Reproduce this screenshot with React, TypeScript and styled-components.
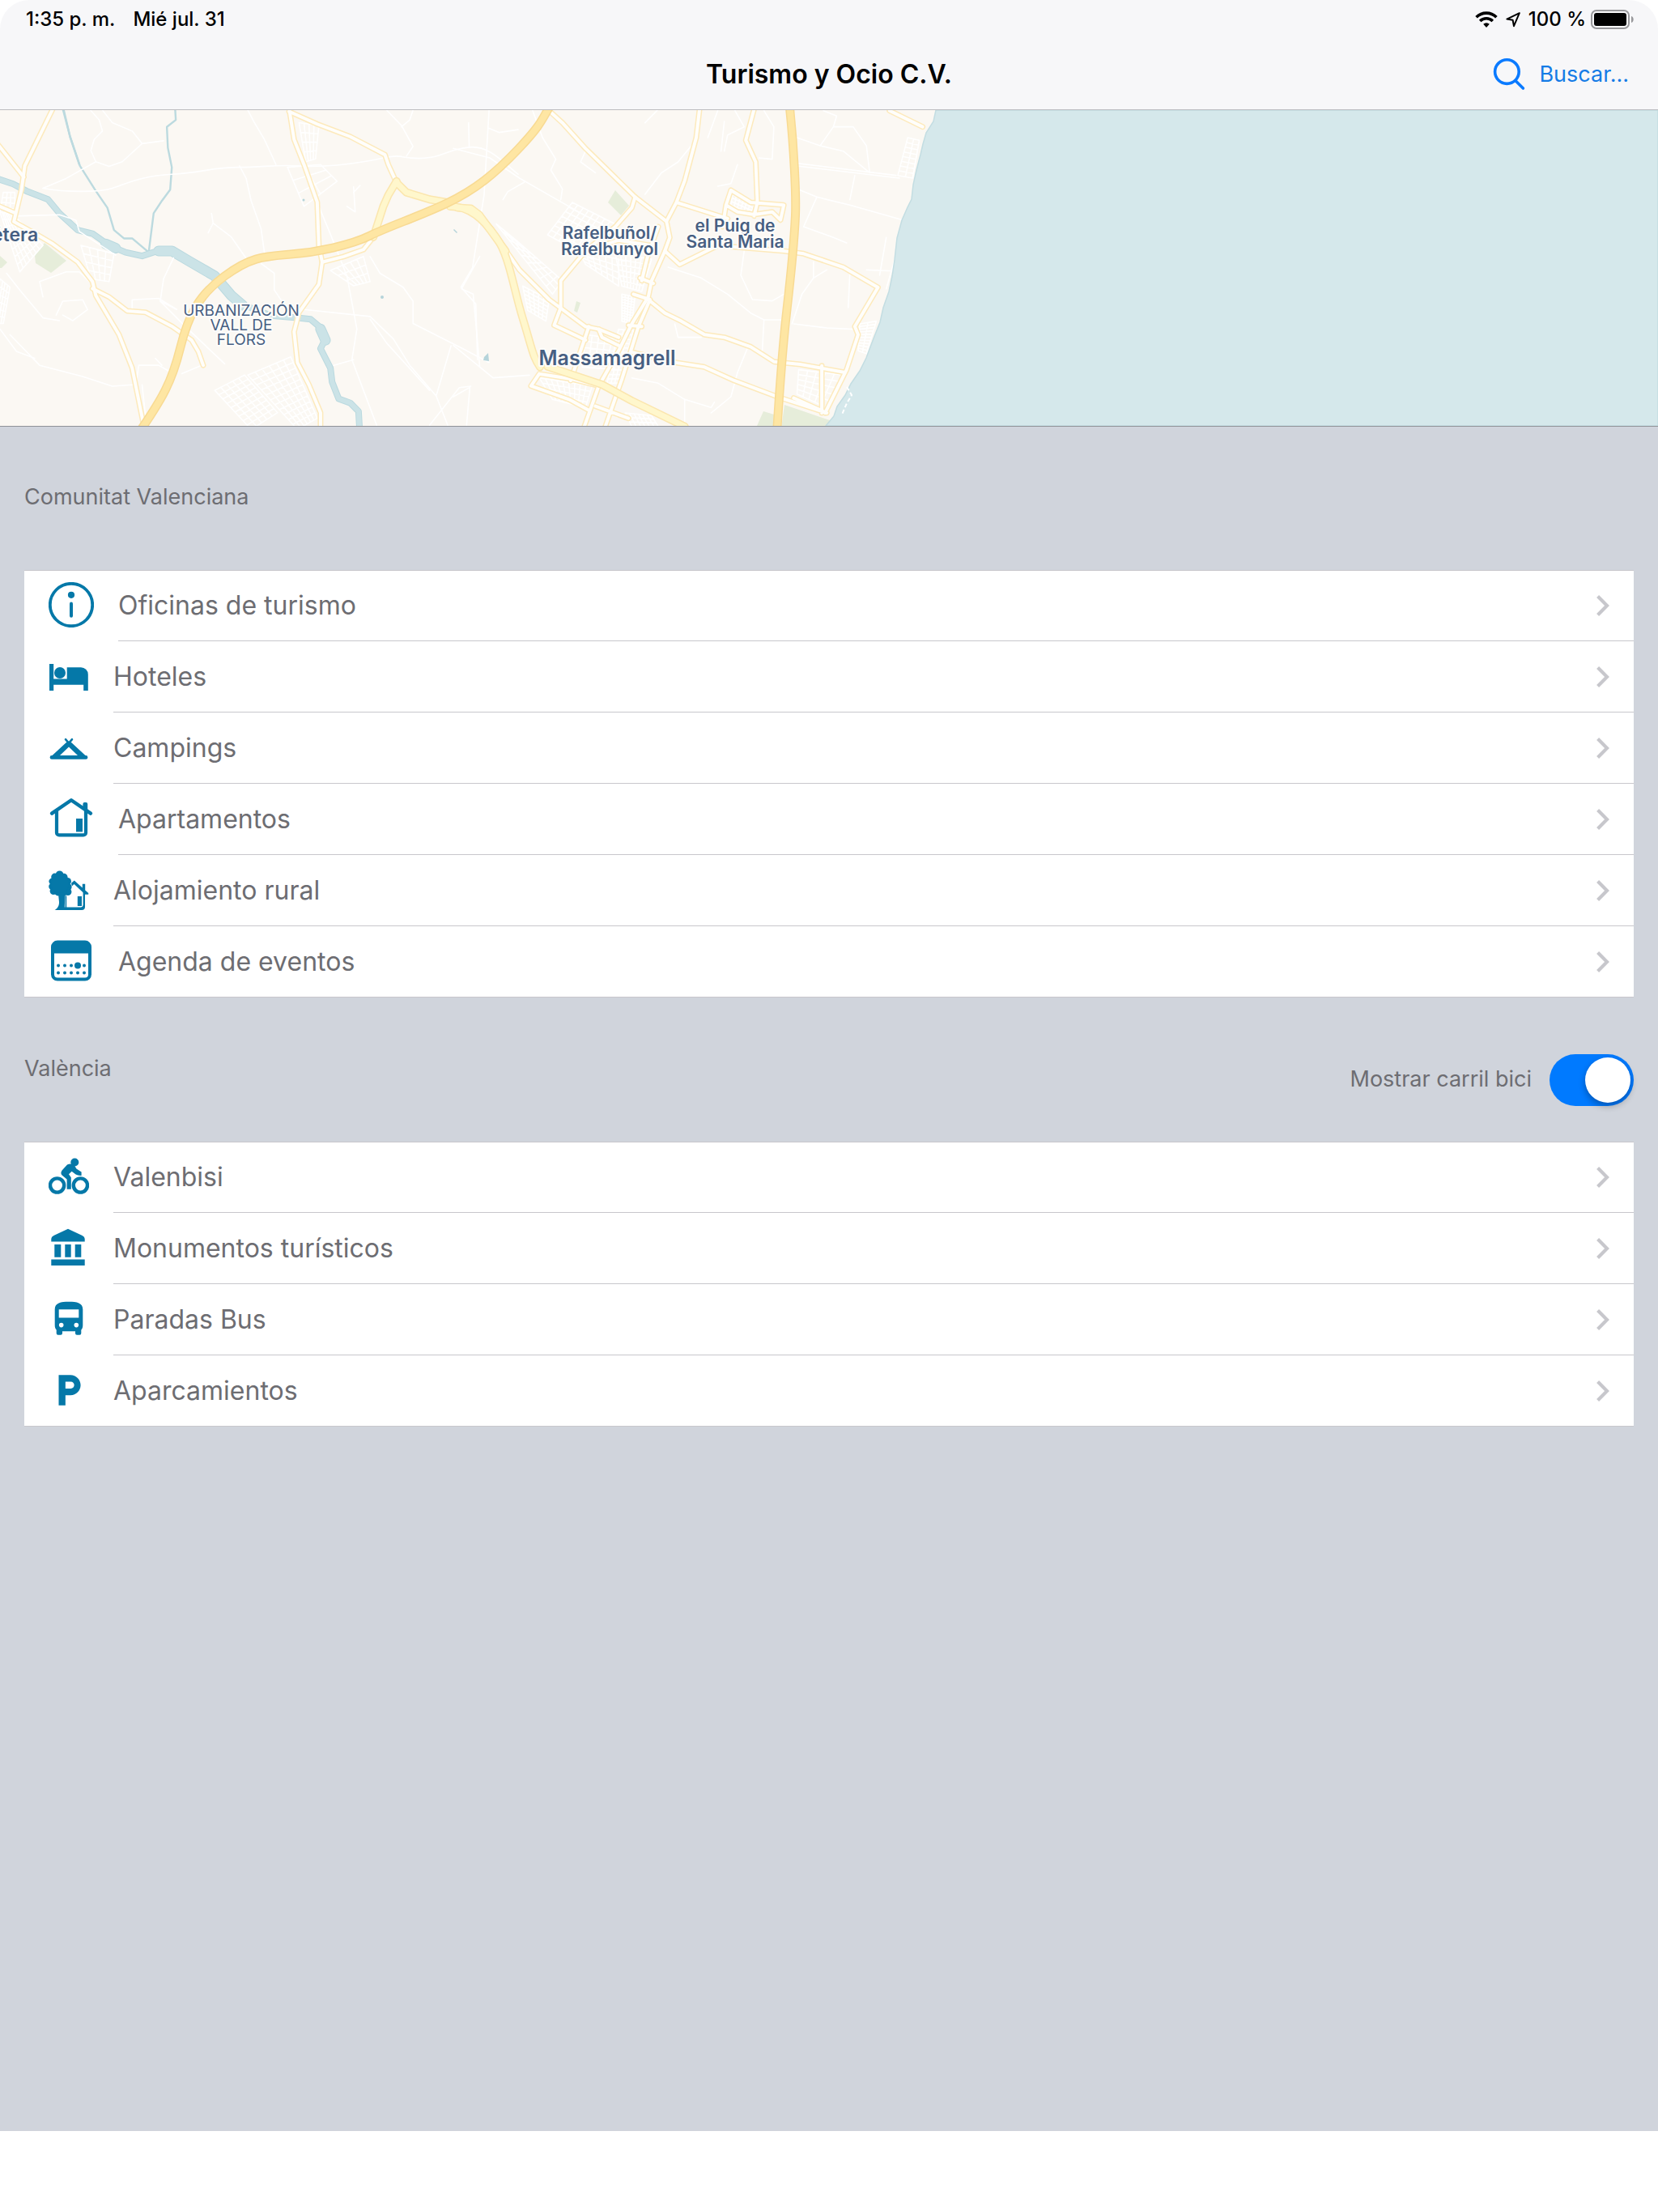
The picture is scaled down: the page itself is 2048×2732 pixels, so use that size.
import React, { useState } from "react";
import styled, { createGlobalStyle } from "styled-components";
import { MdLocalParking } from "react-icons/md";

const BRAND = "#0578a8";
const GREY_TEXT = "#6d6d72";
const LINE = "#c8c7cc";

const GlobalStyle = createGlobalStyle`
  *, *::before, *::after { box-sizing: border-box; }
  body {
    margin: 0;
    background: #ffffff;
    font-family: Inter, "Liberation Sans", sans-serif;
    -webkit-font-smoothing: antialiased;
  }
`;

const Page = styled.div`
  display: flex;
  flex-direction: column;
  min-height: 100vh;
`;

const Header = styled.header`
  background: #f7f7f9;
  border-bottom: 1px solid #bcbcc0;
  border-radius: 36px 36px 0 0;
`;

const StatusBar = styled.div`
  display: flex;
  align-items: center;
  justify-content: space-between;
  height: 48px;
  padding: 0 30px 0 32px;
  font-size: 24px;
  font-weight: 500;
  line-height: 32px;
  color: #000000;
`;

const StatusGroup = styled.div<{ $gap: number }>`
  display: flex;
  align-items: center;
  gap: ${(p) => p.$gap}px;
`;

const NavBar = styled.div`
  display: grid;
  grid-template-columns: 1fr auto 1fr;
  align-items: center;
  height: 87px;
  padding: 0 36px;
`;

const Title = styled.h1`
  grid-column: 2;
  margin: 0;
  font-size: 32px;
  font-weight: 600;
  line-height: 40px;
  color: #000000;
`;

const SearchButton = styled.button`
  justify-self: end;
  display: flex;
  align-items: center;
  gap: 16px;
  padding: 0;
  border: 0;
  background: none;
  color: #147be6;
  font: inherit;
  font-size: 27px;
  line-height: 40px;
  cursor: pointer;
`;

const MapFrame = styled.section`
  height: 391px;
  border-bottom: 1px solid #8f9298;
  background: #fbf8f3;
  overflow: hidden;

  svg { display: block; width: 100%; height: 100%; }
`;

const Main = styled.main`
  flex: 1;
  display: flex;
  flex-direction: column;
  gap: 1px;
  padding: 0 30px;
  background: #d0d4dc;
`;

const SectionHead = styled.div`
  display: flex;
  justify-content: space-between;
  align-items: flex-start;
  height: 177px;
  padding-top: 69px;
`;

const SectionTitle = styled.h2`
  margin: 0;
  font-size: 27px;
  font-weight: 400;
  line-height: 36px;
  color: ${GREY_TEXT};
`;

const SwitchLabel = styled.label`
  display: flex;
  align-items: flex-start;
  gap: 22px;
  font-size: 27px;
  line-height: 61px;
  color: ${GREY_TEXT};
`;

const Switch = styled.input`
  appearance: none;
  display: flex;
  justify-content: flex-start;
  width: 104px;
  height: 64px;
  margin: 0;
  padding: 4px;
  border-radius: 32px;
  background: #e5e5ea;
  cursor: pointer;

  &::after {
    content: "";
    width: 56px;
    height: 56px;
    border-radius: 50%;
    background: #ffffff;
    box-shadow: 0 4px 8px rgba(0, 0, 0, 0.3);
  }

  &:checked {
    justify-content: flex-end;
    background: #007aff;
  }
`;

const List = styled.ul`
  margin: 0;
  padding: 0;
  list-style: none;
  background: #ffffff;
  box-shadow: inset 0 1px ${LINE}, inset 0 -1px ${LINE};
`;

const RowLink = styled.a`
  display: flex;
  align-items: stretch;
  gap: 30px;
  height: 88px;
  padding-left: 30px;
  color: ${GREY_TEXT};
  text-decoration: none;
`;

const IconSlot = styled.span<{ $size: number }>`
  flex: none;
  display: flex;
  align-items: center;
  justify-content: center;
  width: ${(p) => p.$size}px;
  padding-bottom: 2px;
  color: ${BRAND};
`;

const RowBody = styled.span`
  flex: 1;
  display: flex;
  align-items: center;
  justify-content: space-between;
  padding-right: 30px;
  border-bottom: 1px solid ${LINE};
  font-size: 32px;
  line-height: 44px;
`;

const Footer = styled.footer`
  height: 100px;
  background: #ffffff;
`;

/* ---------- status and navigation icons ---------- */

const WifiIcon = () => (
  <svg width="28" height="22" viewBox="0 0 28 22" fill="none" stroke="#000" strokeWidth="3.6" aria-hidden="true">
    <path d="M1.6 8.2a17.6 17.6 0 0 1 24.8 0" />
    <path d="M6.2 13a11 11 0 0 1 15.6 0" />
    <path d="M14 21l-3.8-4.2a5.4 5.4 0 0 1 7.6 0z" fill="#000" stroke="none" />
  </svg>
);

const LocationIcon = () => (
  <svg width="18" height="20" viewBox="0 0 18 20" fill="none" stroke="#000" strokeWidth="2" strokeLinejoin="round" aria-hidden="true">
    <path d="M16.8 2.2L1.4 9.6l7.2 1.2 1.4 7.4z" />
  </svg>
);

const BatteryIcon = () => (
  <svg width="53" height="24" viewBox="0 0 53 24" aria-hidden="true">
    <rect x="1" y="1" width="46" height="22" rx="6" fill="none" stroke="#98989b" strokeWidth="2" />
    <rect x="4" y="4" width="40" height="16" rx="3" fill="#000" />
    <path d="M50 8c3.6 1 3.6 7 0 8z" fill="#98989b" />
  </svg>
);

const SearchIcon = () => (
  <svg width="42" height="42" viewBox="0 0 42 42" fill="none" stroke="#0a7aff" strokeWidth="3.6" strokeLinecap="round" aria-hidden="true">
    <circle cx="18.4" cy="17.6" r="14.8" />
    <path d="M28.8 28.4l9.6 9.6" />
  </svg>
);

const Chevron = () => (
  <svg width="16" height="26" viewBox="0 0 16 26" fill="none" stroke="#c7c7cc" strokeWidth="4.2" aria-hidden="true">
    <path d="M1.6 1.6L13 13 1.6 24.4" />
  </svg>
);

/* ---------- category icons ---------- */

type IconProps = { size: number; children: React.ReactNode };

const Glyph = ({ size, children }: IconProps) => (
  <svg width={size} height={size} viewBox={`0 0 ${size} ${size}`} fill="currentColor" aria-hidden="true">
    {children}
  </svg>
);

const stroke = { fill: "none", stroke: "currentColor", strokeLinecap: "round", strokeLinejoin: "round" } as const;

const InfoIcon = () => (
  <Glyph size={56}>
    <circle cx="28" cy="28" r="26.2" {...stroke} strokeWidth="3.8" />
    <circle cx="28" cy="15.8" r="4.1" />
    <path d="M28 26.4v15.4" {...stroke} strokeWidth="4" />
  </Glyph>
);

const BedIcon = () => (
  <Glyph size={50}>
    <path d="M1 10h5.2v18.5h16.5V14.2H40a8.8 8.8 0 0 1 8.8 8.8v20h-5.6v-7.3H6.2V43H1z" />
    <circle cx="14" cy="21" r="7" />
  </Glyph>
);

const CampIcon = () => (
  <Glyph size={50}>
    <path d="M21 15.2l4 4.6 4-4.6" {...stroke} strokeWidth="2.6" />
    <path
      fillRule="evenodd"
      d="M25 17.4l3.4 1.8L45.4 35h.6a2.4 2.4 0 0 1 0 4.8H4A2.4 2.4 0 0 1 4 35h.6l17-15.8zM25 24.6L14 34.9h22z"
    />
  </Glyph>
);

const HouseIcon = () => (
  <Glyph size={56}>
    <path d="M4 21.6L28 5.2l24 16.4" {...stroke} strokeWidth="4.4" />
    <path d="M42.4 14V10a2 2 0 0 1 2-2h1.8a2 2 0 0 1 2 2v10z" />
    <path d="M10 19v26.4a3 3 0 0 0 3 3h30a3 3 0 0 0 3-3V19" {...stroke} strokeWidth="4.2" />
    <path d="M34 28h8v16.4h-8z" />
  </Glyph>
);

const RuralIcon = () => (
  <Glyph size={50}>
    <circle cx="13.6" cy="6.2" r="4.8" />
    <circle cx="7.6" cy="9" r="4.4" />
    <circle cx="19" cy="9.4" r="4.6" />
    <circle cx="4.6" cy="14.6" r="4.2" />
    <circle cx="23.4" cy="14.6" r="4.6" />
    <circle cx="4.4" cy="21" r="4.2" />
    <circle cx="24" cy="21.4" r="4.6" />
    <circle cx="6" cy="26.6" r="4.4" />
    <circle cx="23.8" cy="27.4" r="4.6" />
    <circle cx="11.6" cy="28" r="4.4" />
    <circle cx="18" cy="28.4" r="4.6" />
    <circle cx="14" cy="18" r="11" />
    <path d="M12 30h8.4l-.6 16.6H40a3 3 0 0 0 2.6-2.8V28h2.4v18a4 4 0 0 1-4 4H7.6c3.4-2 5.6-5.4 5.4-10z" />
    <path d="M28 16.8l3.8-3.4 10 9v-4.6h3.4v7.6l4 3.6v1.8h-4l-13.6-12.8-2.8 2.6z" />
    <path d="M35.8 33h5.2v12h-5.2z" />
    <path d="M21.4 33v15" {...stroke} strokeWidth="1.6" />
  </Glyph>
);

const CalendarIcon = () => (
  <Glyph size={56}>
    <path
      fillRule="evenodd"
      d="M11 2.6h34a8 8 0 0 1 8 8v34a8 8 0 0 1-8 8H11a8 8 0 0 1-8-8v-34a8 8 0 0 1 8-8zM7 18.6v26a4 4 0 0 0 4 4h34a4 4 0 0 0 4-4v-26z"
    />
    {[12, 20, 28, 44].map((x) => (
      <circle key={x} cx={x} cy="33.6" r="2" />
    ))}
    <circle cx="36" cy="33.6" r="4" />
    {[12, 20, 28, 36, 44].map((x) => (
      <circle key={x} cx={x} cy="42.6" r="2" />
    ))}
  </Glyph>
);

const BikeIcon = () => (
  <Glyph size={50}>
    <circle cx="10.6" cy="36" r="8.6" {...stroke} strokeWidth="4.4" />
    <circle cx="39.4" cy="36" r="8.6" {...stroke} strokeWidth="4.4" />
    <circle cx="32.3" cy="7.5" r="5" />
    <path d="M23 10.4q4.4-2 8.6.4l2.8 4.8 6.200 4v4.400q-4 .4-7-1.4l-5-3.800-3.600 3.400 2.800 4v14.600h-5.200V28.600l-6-5q-2.400-2.600 0-6z" />
  </Glyph>
);

const MuseumIcon = () => (
  <Glyph size={50}>
    <path d="M24 1.8l17.6 8.2q3.1 1.400 3.100 4v3.600H3.300V14q0-2.600 3.100-4zM7.300 21h8v15.800h-8zM20.300 21h7.400v15.800h-7.400zM32.700 21h7.600v15.800h-7.600zM3.300 39.600h41.400v7.400H3.300z" />
  </Glyph>
);

const BusIcon = () => (
  <Glyph size={50}>
    <path
      fillRule="evenodd"
      d="M7.7 13.2c0-8 7.3-9.4 17.3-9.4s17.3 1.4 17.3 9.4v19.6c0 3-.8 4.4-2 5.6v4.400a2 2 0 0 1-2 2H35a2 2 0 0 1-2-2v-2.600H17v2.600a2 2 0 0 1-2 2h-3.300a2 2 0 0 1-2-2v-4.400c-1.200-1.200-2-2.600-2-5.600zM12.700 13.200v10.400h24.600V13.200zM15.700 29.800a2.800 2.800 0 1 0 0 5.600 2.800 2.800 0 0 0 0-5.600zM34.300 29.800a2.800 2.800 0 1 0 0 5.600 2.800 2.800 0 0 0 0-5.600z"
    />
  </Glyph>
);

const ParkingIcon = () => <MdLocalParking size={52} aria-hidden="true" />;

/* ---------- map ---------- */

type Point = [number, number];

/* Street lattice between four corners, n lines one way and m the other. */
const lattice = (a: Point, b: Point, c: Point, d: Point, n: number, m: number) => {
  const mix = (p: Point, q: Point, t: number) =>
    `${Math.round(p[0] + (q[0] - p[0]) * t)} ${Math.round(p[1] + (q[1] - p[1]) * t)}`;
  let path = "";
  for (let i = 0; i <= n; i++) path += `M${mix(a, b, i / n)}L${mix(d, c, i / n)}`;
  for (let i = 0; i <= m; i++) path += `M${mix(a, d, i / m)}L${mix(b, c, i / m)}`;
  return path;
};

const sheets = [
  {
    name: "west",
    transform: "matrix(.40816 0 0 .34439 0 -136)",
    streets: [
      "M130 675L200 640 290 580 275 540 285 500 310 470 300 430 270 390M290 580L330 597 370 580 430 515 495 505M430 515L400 470 340 440 310 395",
      "M130 675C200 690 300 690 340 675S430 630 520 625 640 600 720 600 830 590 900 595 1050 590 1100 580 1180 560 1200 560 1250 575 1300 565 1360 535 1420 528 1520 580 1568 625",
      "M750 395L770 440 800 500 835 590M725 595L745 640 760 720 790 820 800 905M630 835L645 800 640 765M645 800L700 850 750 935M790 945L830 980 830 1040 870 1110",
      "M1170 395L1215 450 1250 525 1230 560M1480 395L1465 700 1430 960 1395 1030 1440 1090 1445 1290M1250 395L1240 430 1215 455M1420 528L1418 440M1480 460L1510 475 1568 465",
      "M920 1110L1120 1135 1190 1215 1240 1310 1320 1420 1355 1525M1120 1145L1170 1230 1300 1400M1120 920L1150 980 1220 1030 1250 1080 1250 1160 1400 1250 1480 1300M1300 1525L1390 1390 1425 1385M1365 1240L1320 1420",
      "M1050 990L1080 1180 1065 1290 1100 1400 1140 1525M1010 1310L1070 1290M965 740L1000 840 1030 930 1050 990M525 925L495 1000 485 1080 535 1110",
      "M535 1110L480 1070 400 1075 400 1110M45 775L180 770 230 790 240 830 350 915M0 1180L50 1260 105 1285M30 1200L120 1310 250 1350 340 1385 400 1380M485 1080L560 1170 680 1305M550 1340L610 1310M20 980L60 1040 130 1140 180 1150",
      "M410 1390L420 1310 480 1310 510 1330M430 1380L440 1490M470 1285L490 1310M1070 670L1075 760 1050 740M1070 690L1090 665M170 1130L190 1080 250 1075 265 1110 220 1150 190 1130M130 1065L120 1010 200 975 240 975 270 1010",
      lattice([870, 600], [970, 590], [1020, 650], [920, 740], 2, 3),
      lattice([905, 440], [965, 450], [955, 570], [925, 580], 4, 4),
      lattice([0, 760], [40, 770], [130, 880], [60, 975], 7, 8),
      lattice([10, 690], [45, 690], [45, 770], [0, 760], 3, 4),
      lattice([245, 880], [345, 910], [330, 1010], [275, 1000], 4, 4),
      lattice([1000, 970], [1100, 920], [1120, 1010], [1070, 1025], 5, 3),
      lattice([0, 1000], [30, 1030], [10, 1160], [-20, 1160], 4, 6),
      lattice([650, 1400], [740, 1345], [840, 1480], [760, 1540], 5, 9),
      lattice([750, 1345], [880, 1280], [960, 1500], [900, 1540], 6, 11),
    ],
    roads: [
      "M160 390L75 595 65 680 42 795 110 840 160 875 235 940 280 1010 290 1060 360 1200 400 1320 435 1525",
      "M-5 520L72 635M-5 738L42 762M280 1035L330 1065 385 1115 440 1120 520 1170 580 1220 600 1260 615 1310",
      "M875 390L890 500 920 590 960 725 965 880 975 940 965 1020 905 1120 890 1190 900 1300 935 1380 970 1480 970 1530",
      "M875 400L960 445 1060 490 1165 555 1175 590 1200 655M975 940L1040 920 1100 895 1130 850",
    ],
    primary: ["M1130 850L1160 740 1175 700 1200 650", "M1200 655L1230 690 1300 715 1350 725 1385 745 1425 748 1450 770 1490 835 1530 900"],
    motorways: [
      "M430 1535C490 1430 520 1370 545 1250S600 1060 680 990 800 920 880 912 1060 880 1120 845 1260 780 1350 730 1500 620 1568 535 1640 430 1662 385",
    ],
    river: [
      "M-10 640L40 660 80 685 145 715 180 765 235 825 280 838 330 880 380 905 430 918 490 895 520 900 590 945 640 985 700 1060 740 1095 820 1132 900 1140 940 1145 975 1180 985 1215 970 1250 1000 1320 1005 1370 1025 1430 1060 1445 1085 1475 1088 1535",
    ],
    riverWide: ["M480 900L520 900 570 935 650 990 700 1060 735 1095M320 875L350 890M970 1180L985 1220"],
    canals: [
      "M190 390L212 490 242 595 290 685 325 745 345 825 375 855 400 855 450 905M530 390L532 430 505 455 508 530 520 600 515 680 490 720 465 765 458 830 450 905",
      "M192 390L212 490 240 590",
    ],
  },
  {
    name: "east",
    transform: "matrix(.40816 0 0 .33333 560 -56)",
    streets: [
      "M240 170L270 270 310 350 295 390 330 460 325 500M0 310L110 345 200 420 300 490 400 560M150 500L165 470 215 435M620 165L580 215M800 170L770 270M820 210L810 320M850 165L880 230 830 260 820 320",
      "M400 320L385 360 430 400M720 300L680 360 630 400 580 480M1040 375L1350 420M1040 365L1340 410M1215 410L1200 500M1040 270L1110 300 1180 320 1260 400 1250 300 1210 230 1150 230 1110 300M1120 170L1160 190 1150 230",
      "M940 170L970 230 965 350 925 345M860 370L840 440 800 450M1040 460L1100 490 1200 520 1360 575M1100 490L1060 600 1150 640 1190 660M1090 730L1090 790 1130 760M1090 790L1055 850 1025 960M1200 770L1195 900",
      "M650 750L750 790 830 850 900 920 940 945 1000 945M880 690L870 780 905 870 965 875 1000 850M940 945L935 1060M670 960L680 1010 750 1010M1030 960L1130 975 1210 980M700 1340L700 1240M540 1160L620 1180 700 1240 780 1270 790 1250",
      "M780 1290L840 1230 860 1140 890 1050M0 1040L120 1160 230 1150M80 1120L60 850 25 830 80 710M50 1195L0 1230M50 1195L40 1335M1250 760L1350 765M1310 640L1290 780M1350 660L1310 830",
      lattice([360, 510], [490, 590], [420, 720], [285, 630], 8, 7),
      lattice([130, 590], [190, 650], [330, 800], [300, 850], 3, 9),
      lattice([490, 700], [600, 720], [570, 840], [510, 820], 7, 6),
      lattice([380, 690], [500, 720], [500, 820], [400, 740], 6, 4),
      lattice([210, 820], [290, 870], [280, 950], [225, 910], 5, 6),
      lattice([510, 850], [550, 860], [540, 960], [510, 950], 4, 10),
      lattice([400, 1000], [520, 1020], [500, 1130], [390, 1120], 6, 5),
      lattice([260, 1160], [420, 1190], [400, 1270], [300, 1240], 9, 4),
      lattice([500, 980], [545, 985], [500, 1180], [465, 1180], 3, 12),
      lattice([1045, 1130], [1180, 1150], [1130, 1270], [1040, 1220], 5, 5),
      lattice([1375, 270], [1410, 280], [1390, 420], [1345, 410], 2, 8),
      lattice([845, 480], [910, 520], [900, 550], [840, 520], 6, 3),
      lattice([1230, 960], [1280, 950], [1250, 1070], [1225, 1060], 2, 10),
      lattice([520, 1290], [600, 1300], [620, 1340], [540, 1340], 6, 3),
    ],
    roads: [
      "M285 165L330 215 400 310 550 490 645 580 655 640 640 690 600 800 590 860 540 960 500 1060 440 1190 395 1345",
      "M745 165L735 270 700 430 675 510 645 580M675 510L830 570M910 165L885 280 915 360 920 510 910 560M840 465L825 520 860 545 910 555 965 545 990 575 1000 520 900 510 840 465M825 520L815 600",
      "M550 490L540 530 490 600 400 690 325 800 325 900 305 965 400 1020M640 690L685 740 800 670 1000 690 1060 700 1180 750 1285 825 1215 970 1225 1000 1190 1130 1125 1290",
      "M160 690L200 760 290 870 400 970 440 980 500 1010M590 870L640 920 690 950 760 1000 820 1010 900 1045 970 1100 1050 1110 1185 1140M1115 1115L1115 1290M540 1065L680 1105 760 1120 850 1170 980 1230 1130 1290 1030 1235",
      "M565 790L605 810M545 850L595 870 560 970 510 1165 460 1340M410 970L385 1060 355 1170M440 980L450 1010 500 1040M260 1145L235 1190 350 1240 410 1280M260 1145L360 1165 440 1190M430 1265L530 1310M530 965L570 970M1320 170L1420 230",
      "M620 600L590 700 570 800M400 690L500 650 600 670",
    ],
    primary: ["M-10 525C50 525 90 570 130 640S180 820 210 940 240 1080 262 1120", "M285 1118L450 1185 540 1245 700 1340"],
    motorways: ["M1018 160C1030 300 1038 480 1035 560S1025 740 1010 900 990 1150 980 1345"],
    river: [],
    riverWide: [],
    canals: [],
  },
];

type Layer = "streets" | "roads" | "primary" | "motorways" | "river" | "riverWide" | "canals";

const Strokes = ({ layer, color, width }: { layer: Layer; color: string; width: number }) => (
  <>
    {sheets.map((sheet) => (
      <g key={sheet.name} transform={sheet.transform}>
        {sheet[layer].map((d, i) => (
          <path key={i} d={d} vectorEffect="non-scaling-stroke" stroke={color} strokeWidth={width} />
        ))}
      </g>
    ))}
  </>
);

const MapLabel = styled.text<{ $size: number; $weight: number }>`
  font-family: Inter, "Liberation Sans", sans-serif;
  font-size: ${(p) => p.$size}px;
  font-weight: ${(p) => p.$weight};
  text-anchor: middle;
  fill: #475f82;
  stroke: #fdfcfa;
  stroke-width: 4px;
  stroke-linejoin: round;
  paint-order: stroke;
`;

const CoastMap = () => (
  <svg viewBox="0 0 2048 390" preserveAspectRatio="xMidYMid slice" role="img" aria-label="Mapa">
    <rect width="2048" height="390" fill="#fbf8f3" />
    <g fill="#e6edda">
      <path d="M43 180l12-16 27 22-19 15-19-12z" />
      <path d="M0 180l9 8-7 7H0z" />
      <path d="M760 99l17 19-10 12-16-16z" />
      <path d="M935 390l8-18 20 6-4 12zM969 364l56 19-4 10h-56z" />
      <path d="M712 236l5 2-4 12-4-2z" />
    </g>
    <g fill="none" strokeLinejoin="round" strokeLinecap="round">
      <Strokes layer="canals" color="#bcdadf" width={2.4} />
      <Strokes layer="river" color="#bad9df" width={8} />
      <Strokes layer="riverWide" color="#bad9df" width={13} />
      <Strokes layer="river" color="#cbe3e7" width={6} />
      <Strokes layer="riverWide" color="#cbe3e7" width={11} />
      <Strokes layer="streets" color="#ffffff" width={1.6} />
      <Strokes layer="roads" color="#fdeabc" width={7} />
      <Strokes layer="roads" color="#fffefb" width={4} />
      <Strokes layer="primary" color="#fbe6ae" width={10} />
      <Strokes layer="primary" color="#fff7cc" width={7} />
      <Strokes layer="motorways" color="#f8da93" width={11} />
      <Strokes layer="motorways" color="#fee6a3" width={8} />
    </g>
    <path
      d="M1156 0L1153 14 1144 28 1140 42 1137 55 1132 74 1128 92 1126 110 1121 120 1114 136 1108 158 1105 185 1102 205 1098 224 1091 244 1087 262 1079 282 1070 306 1062 322 1051 338 1044 352 1034 366 1030 378 1020 390H2048V0z"
      fill="#d5e8eb"
      stroke="#c3dde2"
      strokeWidth="1.5"
    />
    <path d="M1046 342l6 10-6 10-6 14" fill="none" stroke="#fff" strokeWidth="2" strokeDasharray="5 3" />
    <g fill="#b5d4da">
      <path d="M598 305l5-5 1 10-7-1z" />
      <circle cx="375" cy="111" r="1.5" />
      <circle cx="472" cy="231" r="2" />
      <path d="M561 147l4 4-1 1-4-4z" />
    </g>
    <MapLabel x="11" y="162" $size={23} $weight={600}>Bétera</MapLabel>
    <MapLabel x="298" y="254" $size={19} $weight={400}>URBANIZACIÓN</MapLabel>
    <MapLabel x="298" y="272" $size={19} $weight={400}>VALL DE</MapLabel>
    <MapLabel x="298" y="290" $size={19} $weight={400}>FLORS</MapLabel>
    <MapLabel x="753" y="159" $size={21} $weight={600}>Rafelbuñol/</MapLabel>
    <MapLabel x="753" y="179" $size={21} $weight={600}>Rafelbunyol</MapLabel>
    <MapLabel x="908" y="150" $size={21} $weight={600}>el Puig de</MapLabel>
    <MapLabel x="908" y="170" $size={21} $weight={600}>Santa Maria</MapLabel>
    <MapLabel x="750" y="315" $size={25} $weight={600}>Massamagrell</MapLabel>
  </svg>
);

/* ---------- lists ---------- */

type Entry = { label: string; size: 50 | 56; Icon: () => React.JSX.Element };

const community: Entry[] = [
  { label: "Oficinas de turismo", size: 56, Icon: InfoIcon },
  { label: "Hoteles", size: 50, Icon: BedIcon },
  { label: "Campings", size: 50, Icon: CampIcon },
  { label: "Apartamentos", size: 56, Icon: HouseIcon },
  { label: "Alojamiento rural", size: 50, Icon: RuralIcon },
  { label: "Agenda de eventos", size: 56, Icon: CalendarIcon },
];

const city: Entry[] = [
  { label: "Valenbisi", size: 50, Icon: BikeIcon },
  { label: "Monumentos turísticos", size: 50, Icon: MuseumIcon },
  { label: "Paradas Bus", size: 50, Icon: BusIcon },
  { label: "Aparcamientos", size: 50, Icon: ParkingIcon },
];

const EntryList = ({ entries }: { entries: Entry[] }) => (
  <List>
    {entries.map(({ label, size, Icon }) => (
      <li key={label}>
        <RowLink href="#">
          <IconSlot $size={size}>
            <Icon />
          </IconSlot>
          <RowBody>
            {label}
            <Chevron />
          </RowBody>
        </RowLink>
      </li>
    ))}
  </List>
);

export default function App() {
  const [bikeLanes, setBikeLanes] = useState(true);

  return (
    <>
      <GlobalStyle />
      <Page>
        <Header>
          <StatusBar>
            <StatusGroup $gap={22}>
              <span>1:35 p. m.</span>
              <span>Mié jul. 31</span>
            </StatusGroup>
            <StatusGroup $gap={10}>
              <WifiIcon />
              <LocationIcon />
              <StatusGroup $gap={6}>
                <span>100 %</span>
                <BatteryIcon />
              </StatusGroup>
            </StatusGroup>
          </StatusBar>
          <NavBar>
            <Title>Turismo y Ocio C.V.</Title>
            <SearchButton type="button">
              <SearchIcon />
              Buscar...
            </SearchButton>
          </NavBar>
        </Header>
        <MapFrame>
          <CoastMap />
        </MapFrame>
        <Main>
          <section>
            <SectionHead>
              <SectionTitle>Comunitat Valenciana</SectionTitle>
            </SectionHead>
            <EntryList entries={community} />
          </section>
          <section>
            <SectionHead>
              <SectionTitle>València</SectionTitle>
              <SwitchLabel>
                Mostrar carril bici
                <Switch
                  type="checkbox"
                  role="switch"
                  checked={bikeLanes}
                  onChange={(e) => setBikeLanes(e.target.checked)}
                />
              </SwitchLabel>
            </SectionHead>
            <EntryList entries={city} />
          </section>
        </Main>
        <Footer />
      </Page>
    </>
  );
}
